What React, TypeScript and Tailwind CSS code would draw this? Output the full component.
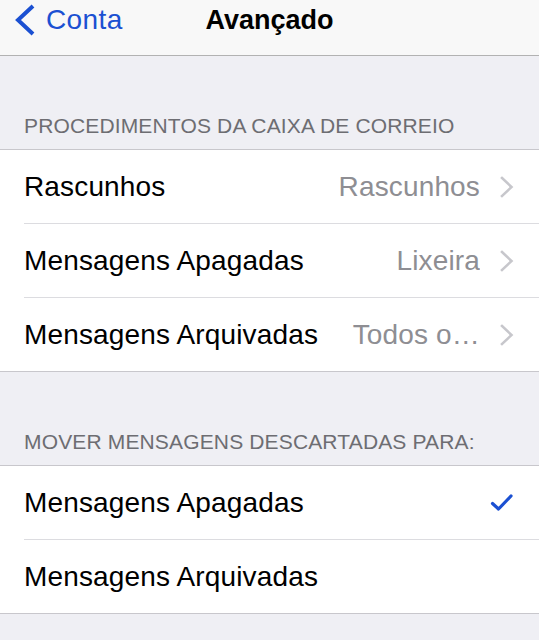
import type { ReactNode } from "react";

type Row = {
  label: string;
  value?: string;
  chevron?: boolean;
  checked?: boolean;
};

const mailboxRows: Row[] = [
  { label: "Rascunhos", value: "Rascunhos", chevron: true },
  { label: "Mensagens Apagadas", value: "Lixeira", chevron: true },
  { label: "Mensagens Arquivadas", value: "Todos o…", chevron: true },
];

const discardRows: Row[] = [
  { label: "Mensagens Apagadas", checked: true },
  { label: "Mensagens Arquivadas" },
];

function Chevron() {
  return (
    <svg width="14" height="22" viewBox="0 0 14 22" className="ml-[20px] shrink-0">
      <path d="M2 2 L11.5 11 L2 20" fill="none" stroke="#c7c7cc" strokeWidth="2.6" strokeLinecap="square" />
    </svg>
  );
}

function Check() {
  return (
    <svg width="24" height="20" viewBox="0 0 24 20" className="shrink-0">
      <path d="M2.5 10.5 L8.5 16 L21 3" fill="none" stroke="#1b50d2" strokeWidth="3.2" strokeLinecap="round" strokeLinejoin="round" />
    </svg>
  );
}

function SectionHeader({ children }: { children: ReactNode }) {
  return (
    <div className="flex h-[93px] items-end pb-[13px] pl-[24px] text-[21px] leading-[21px] tracking-[0.15px] text-[#6d6d72]">
      {children}
    </div>
  );
}

function Group({ rows }: { rows: Row[] }) {
  return (
    <div className="border-y border-[#c8c7cc] bg-white">
      {rows.map((row, index) => (
        <div className="pl-[24px]" key={row.label}>
          <div
            className={
              index < rows.length - 1
                ? "flex h-[74px] items-center border-b border-[#dcdce0] pr-[25px] pt-[1px]"
                : "flex h-[73px] items-center pr-[25px] pt-[1px]"
            }
          >
            <span className="shrink-0 text-[28px] tracking-[0.15px] text-black">{row.label}</span>
            <span className="ml-auto truncate pl-[22px] text-[28px] tracking-[0.15px] text-[#8e8e93]">{row.value}</span>
            {row.chevron ? <Chevron /> : null}
            {row.checked ? <Check /> : null}
          </div>
        </div>
      ))}
    </div>
  );
}

export default function App() {
  return (
    <div className="h-[640px] w-[539px] overflow-hidden bg-[#efeff4] font-['Liberation_Sans',Arial,sans-serif]">
      <div className="relative h-[56px] border-b border-[#b2b2b2] bg-[#f8f8f8]">
        <div className="flex h-[40px] items-center pl-[14px]">
          <svg width="22" height="32" viewBox="0 0 22 32" className="shrink-0">
            <path d="M19 2 L4 16 L19 30" fill="none" stroke="#1b50d2" strokeWidth="4" strokeLinecap="butt" strokeLinejoin="miter" />
          </svg>
          <span className="ml-[10px] text-[28px] leading-[40px] tracking-[0.4px] text-[#1b50d2]">Conta</span>
        </div>
        <div className="absolute inset-x-0 top-0 flex h-[40px] items-center justify-center">
          <span className="text-[27px] font-bold leading-[40px] text-black">Avançado</span>
        </div>
      </div>

      <SectionHeader>PROCEDIMENTOS DA CAIXA DE CORREIO</SectionHeader>
      <Group rows={mailboxRows} />

      <SectionHeader>MOVER MENSAGENS DESCARTADAS PARA:</SectionHeader>
      <Group rows={discardRows} />
    </div>
  );
}
